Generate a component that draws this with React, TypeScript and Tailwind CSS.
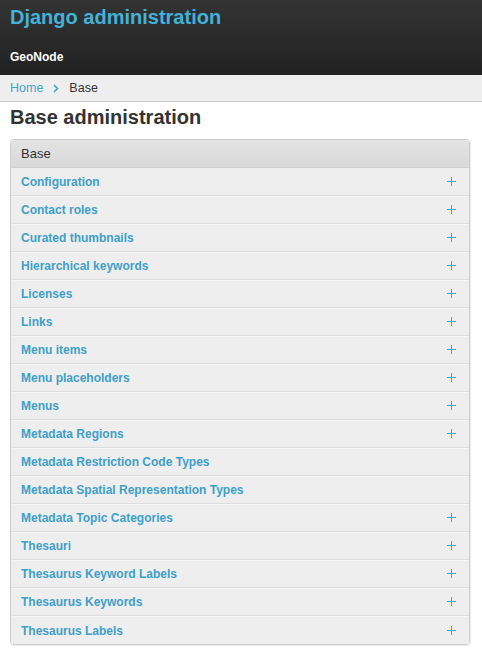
const MODELS: { name: string; add: boolean }[] = [
  { name: "Configuration", add: true },
  { name: "Contact roles", add: true },
  { name: "Curated thumbnails", add: true },
  { name: "Hierarchical keywords", add: true },
  { name: "Licenses", add: true },
  { name: "Links", add: true },
  { name: "Menu items", add: true },
  { name: "Menu placeholders", add: true },
  { name: "Menus", add: true },
  { name: "Metadata Regions", add: true },
  { name: "Metadata Restriction Code Types", add: false },
  { name: "Metadata Spatial Representation Types", add: false },
  { name: "Metadata Topic Categories", add: true },
  { name: "Thesauri", add: true },
  { name: "Thesaurus Keyword Labels", add: true },
  { name: "Thesaurus Keywords", add: true },
  { name: "Thesaurus Labels", add: true },
];

function Plus() {
  return (
    <svg width="9" height="10" viewBox="0 0 9 10" className="block">
      <path d="M4.5 0v9M0 4.5h9" stroke="#3ea6cc" strokeWidth="1" shapeRendering="crispEdges" />
    </svg>
  );
}

export default function App() {
  return (
    <div className="min-h-[659px] bg-white font-['Liberation_Sans',Arial,sans-serif] text-[12px] text-[#333]">
      <header className="h-[75px] bg-gradient-to-b from-[#333333] to-[#222222] px-[10px]">
        <h1 className="pt-[5px] text-[20px] font-bold leading-[24px] text-[#44b1d8]">
          Django administration
        </h1>
        <div className="pt-[20px] text-[12px] font-bold leading-[16px] text-white">GeoNode</div>
      </header>
      <nav className="flex h-[27px] items-center gap-[6px] border-b border-[#cccccc] bg-[#eeeeee] px-[10px] text-[12.5px]">
        <span className="text-[#3ea6cc]">Home</span>
        <svg width="6" height="9" viewBox="0 0 6 9" className="mx-[4px]">
          <path d="M1 1l3.5 3.5L1 8" fill="none" stroke="#3ea6cc" strokeWidth="1.6" />
        </svg>
        <span className="text-[#333]">Base</span>
      </nav>
      <div className="pr-[12px] pl-[10px]">
        <h2 className="pt-[4px] pb-[11px] text-[20px] font-bold leading-[22px] text-[#333]">
          Base administration
        </h2>
        <div className="overflow-hidden rounded-[4px] border border-[#cccccc] shadow-[1px_1px_1px_rgba(0,0,0,0.08)]">
          <div className="flex h-[28px] items-center border-b border-[#cfcfcf] bg-gradient-to-b from-[#e3e3e3] to-[#d9d9d9] px-[10px] text-[13px] text-[#333]">
            Base
          </div>
          {MODELS.map((m, i) => (
            <div
              key={m.name}
              className={
                "flex h-[28px] items-center justify-between bg-[#eeeeee] pr-[13px] pl-[10px] " +
                (i < MODELS.length - 1 ? "border-b border-[#dddddd]" : "") +
                (i > 0 ? " border-t border-t-[#f6f6f6]" : "")
              }
            >
              <span className="font-bold text-[#3ea0c8]">{m.name}</span>
              {m.add && <Plus />}
            </div>
          ))}
        </div>
      </div>
    </div>
  );
}
